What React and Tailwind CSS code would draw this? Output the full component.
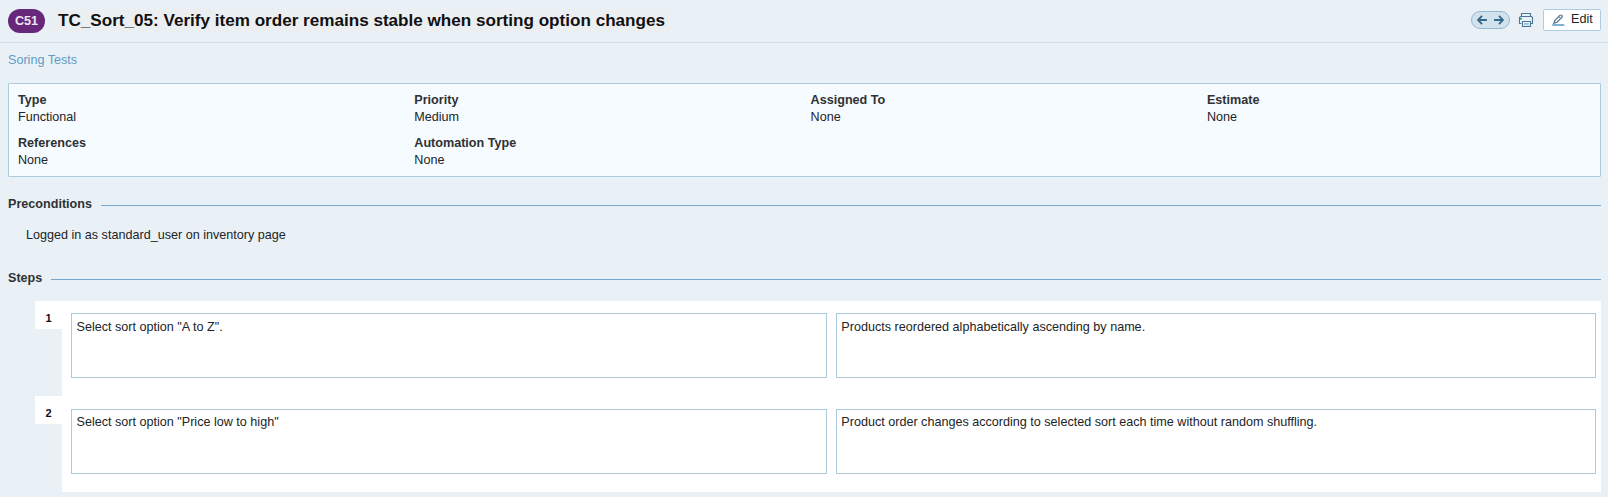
const fields = [
  ['Type', 'Functional'],
  ['Priority', 'Medium'],
  ['Assigned To', 'None'],
  ['Estimate', 'None'],
  ['References', 'None'],
  ['Automation Type', 'None'],
];

function Arrow({ flip }) {
  return (
    <svg width="10" height="10" viewBox="0 0 10 10" fill="none" stroke="#35688a" strokeWidth="1.9" className={flip ? 'rotate-180' : ''}>
      <path d="M9.9 5H1.6M5 0.9L1 5L5 9.1" />
    </svg>
  );
}

function PrinterIcon() {
  return (
    <svg width="16" height="16" viewBox="0 0 16 16" fill="none" stroke="#4b7898" strokeWidth="1.1">
      <path d="M3.5 4.5V1.5H12.5V4.5" />
      <path d="M3.5 11.5H1.5V5.5L2.5 4.5H13.5L14.5 5.5V11.5H12.5" />
      <path d="M4.5 9.5H12.5V14.5H4.5Z" fill="#edf4f8" />
      <path d="M6 11.5H11M6 12.7H11" stroke="#9fbfd5" />
      <path d="M2 6.7H4" stroke="#1aa57c" strokeWidth="1.6" />
    </svg>
  );
}

function PencilIcon() {
  return (
    <svg width="13" height="13" viewBox="0 0 13 13" fill="none">
      <path d="M1.9 9.2L3 6.4L7.8 1.4Q8.8 0.6 9.8 1.4Q10.8 2.4 9.9 3.3L4.8 8.3Z" stroke="#4d718b" strokeWidth="1.2" />
      <path d="M6.8 2.6L8.6 4.4" stroke="#4d718b" />
      <path d="M0.3 11H12.3" stroke="#7fb0cd" strokeWidth="2" />
    </svg>
  );
}

function Heading({ children, className }) {
  return (
    <div className={`flex h-[17px] items-start gap-[9px] ${className}`}>
      <h2 className="font-bold text-[#2f3133]">{children}</h2>
      <div className="mt-[9px] h-px flex-1 bg-[#78a7cb]" />
    </div>
  );
}

function Step({ n, action, expected, rowClass, boxClass }) {
  return (
    <div className={`flex ${rowClass}`}>
      <div className="h-7 w-[27px] bg-white pt-[9px] text-center text-[11px] leading-4 font-bold text-[#160a1c]">{n}</div>
      <div className="flex flex-1 gap-[9px] bg-white pr-[5px] pl-[9px]">
        <div className={`h-[65px] w-[756px] border border-[#adc9da] pl-[4.5px] ${boxClass}`}>{action}</div>
        <div className={`h-[65px] flex-1 border border-[#adc9da] pl-[4.3px] ${boxClass}`}>{expected}</div>
      </div>
    </div>
  );
}

export default function App() {
  return (
    <div className="h-[497px] overflow-hidden bg-[#e9f1f7] font-['Liberation_Sans',Arial,sans-serif] text-[12.6px] leading-[17px] text-[#222426]">
      <header className="flex h-[43px] items-start border-b border-[#cfe1ea] pt-[9px] pr-[7px] pl-2">
        <div className="flex h-6 w-[37px] items-center justify-center rounded-full bg-[#67287c] pt-px font-bold text-[#f0e6f3]">C51</div>
        <h1 className="ml-[9px] h-[23px] bg-[#eceff1] px-1 text-[17.1px] leading-[23px] font-bold whitespace-nowrap text-[#111]">
          TC_Sort_05: Verify item order remains stable when sorting option changes
        </h1>
        <div className="ml-auto flex items-start">
          <div className="mt-[2px] flex h-[18px] w-[39px] items-center justify-center gap-[7px] rounded-full border border-[#93b9d2] bg-[#d2e3ed]">
            <Arrow />
            <Arrow flip />
          </div>
          <div className="mt-[3px] ml-[8px]"><PrinterIcon /></div>
          <button className="ml-[9px] flex h-[22px] w-[58px] rounded-[2px] border border-[#adcbe1] bg-white pl-[8px]">
            <span className="mt-[4px]"><PencilIcon /></span>
            <span className="mt-px ml-[6px]">Edit</span>
          </button>
        </div>
      </header>
      <main className="pr-[7px] pl-2">
        <div className="pt-[9px] text-[#5f9bc4]">Soring Tests</div>
        <section className="mt-[14px] grid h-[94px] grid-cols-[repeat(4,396.3px)] content-start gap-y-[9px] rounded-[1px] border border-[#adcbdf] bg-[#f6fbff] pt-[8px] pl-[9px]">
          {fields.map(([label, value]) => (
            <div key={label}>
              <div className="font-bold text-[#2f3133]">{label}</div>
              <div>{value}</div>
            </div>
          ))}
        </section>
        <Heading className="mt-[19px]">Preconditions</Heading>
        <p className="mt-[14px] pl-[18px]">Logged in as standard_user on inventory page</p>
        <Heading className="mt-[26px]">Steps</Heading>
        <div className="mt-[14px] pl-[27px]">
          <Step n="1" action={'Select sort option "A to Z".'} expected="Products reordered alphabetically ascending by name." rowClass="h-[95px]" boxClass="mt-3 pt-[5px]" />
          <Step n="2" action={'Select sort option "Price low to high"'} expected="Product order changes according to selected sort each time without random shuffling." rowClass="h-24" boxClass="mt-[13px] pt-[4px]" />
        </div>
      </main>
    </div>
  );
}
